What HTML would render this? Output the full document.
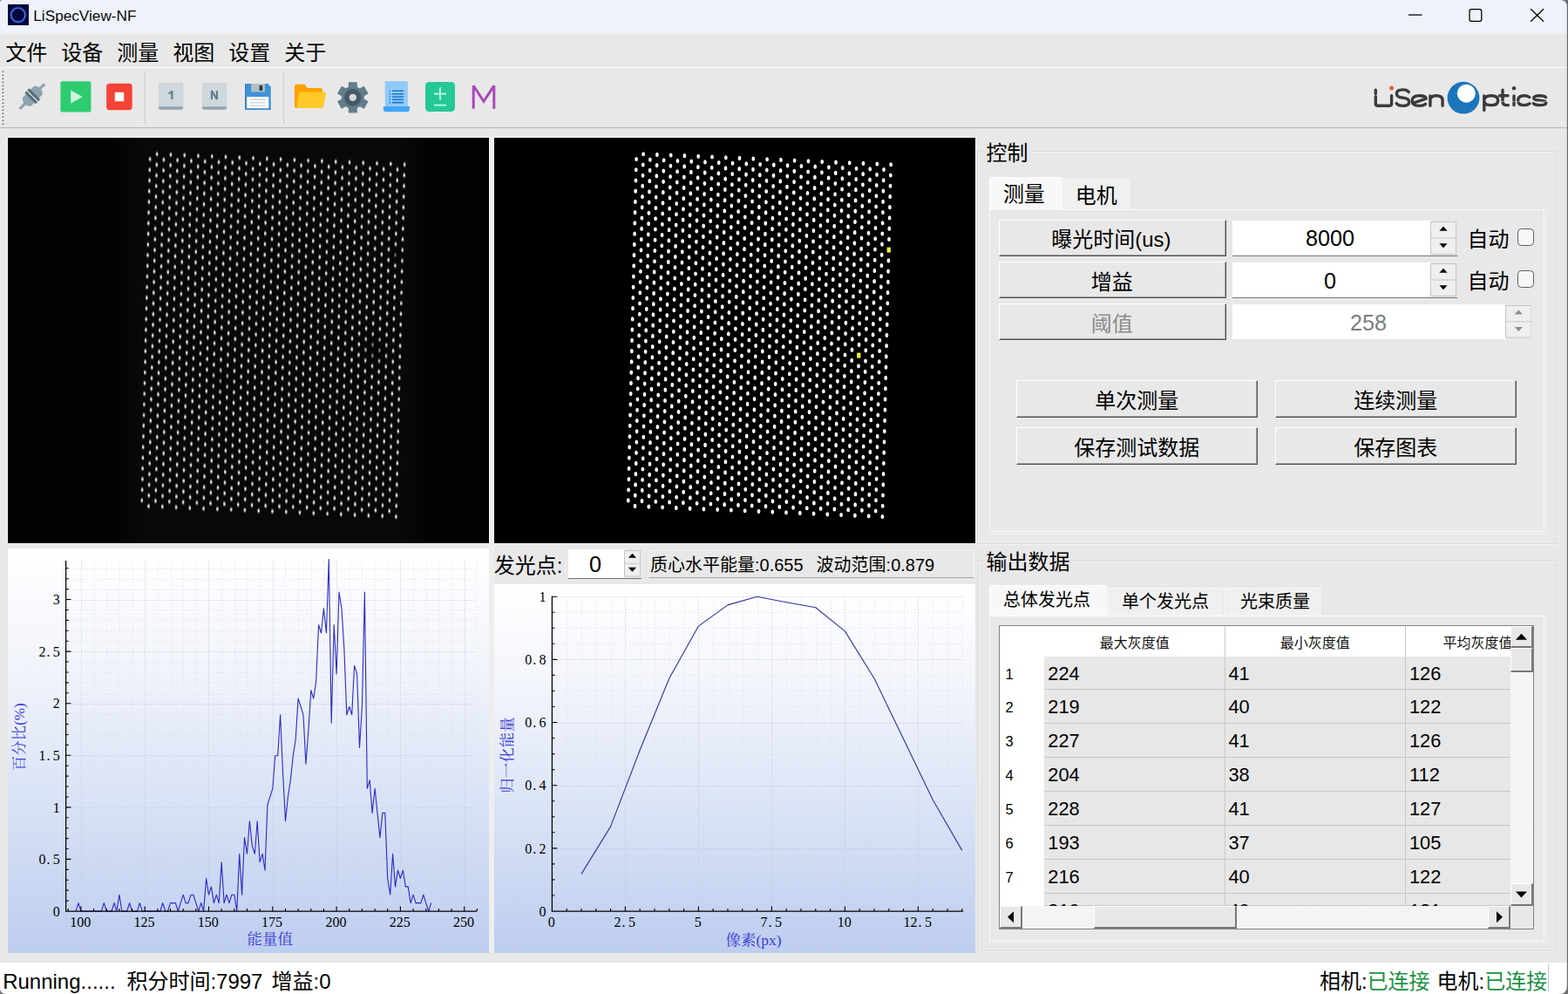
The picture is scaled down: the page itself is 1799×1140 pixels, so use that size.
<!DOCTYPE html>
<html lang="zh"><head><meta charset="utf-8"><title>LiSpecView-NF</title><style>
html,body{margin:0;padding:0}
body{width:1799px;height:1140px;overflow:hidden;background:#e8e8e8;position:relative;font-family:"Liberation Sans",sans-serif}
body>div,body>svg,.chart>svg,.chart>span,.sb>svg{position:absolute;box-sizing:border-box}
.t{white-space:nowrap}
.h{color:transparent;white-space:nowrap;overflow:hidden;text-align:center}
.btn{background:#e8e8e8;border-top:1px solid #fff;border-left:1px solid #fff;border-right:1.3px solid #4e4e4e;border-bottom:1.5px solid #4e4e4e;box-shadow:inset -1px -1px 0 #a2a2a2}
.spin{background:#fff}
.info{background:#e8e8e8;border-top:1px solid #f4f4f4;border-left:1px solid #efefef;border-right:1px solid #f6f6f6;border-bottom:1px solid #a4a4a4}
.grp{border:1px solid #dbdbdb;box-shadow:1px 1px 0 #f2f2f2, inset 1px 1px 0 #f2f2f2}
.pane{border:1px solid #fbfbfb;border-bottom-width:1.500px;background:#e8e8e8}
.pl{background:#f2f2f2}
.tab{background:#f0f0f0;border-top:1px solid #f5f5f5;border-left:1px solid #f6f6f6;border-right:1px solid #e6e6e6}
.tab.sel{background:#f8f8f8;border:0;border-top:1px solid #fcfcfc;border-left:1px solid #fcfcfc}
.chart{overflow:hidden}
.chart span{font-family:"Liberation Serif",serif;font-size:16px;line-height:19px;color:#000;white-space:nowrap}
.chart span i{font-style:normal;display:inline-block;width:8.400px;text-align:left;text-indent:1px}
.xl{width:60px;text-align:center}
.yl{width:58px;text-align:right}
.tbl{border:1px solid #828282;background:#fff}
.tbody{overflow:hidden}
.row{position:absolute;left:0;width:586px;overflow:hidden;font-size:21.800px;line-height:39px;color:#000}
.row b{position:absolute;left:6.500px;top:1px;font-weight:400;font-size:16.500px}
.row span{position:absolute;top:0}
.row::before{content:"";position:absolute;left:51.3px;right:0;top:0;bottom:0;background:#e7e7e7;border-bottom:1px solid #c6c6c6}
.row span,.row b{z-index:1}
.vl{position:absolute;top:0;width:1px;height:100%;background:#c9c9c9}
.track{background:#f4f4f4;background-image:repeating-conic-gradient(#fdfdfd 0 25%,#ebebeb 0 50%);background-size:2px 2px}
.sb{background:#e8e8e8;border-top:1px solid #fff;border-left:1px solid #fff;border-right:2px solid #787878;border-bottom:2px solid #787878;overflow:hidden;z-index:5}
.track,.sb{z-index:5}
#ov{z-index:4;pointer-events:none}
#ov text{font-family:"Liberation Sans","Noto Sans CJK SC",sans-serif;fill:#000}
#ov text.sf{font-family:"Liberation Serif","Noto Serif CJK SC",serif;fill:#3d3dd0}
</style></head>
<body>
<div style="left:0px;top:0px;width:1799px;height:44px;background:linear-gradient(#eff2fa 0,#eff2fa 36px,#e8e8e8 41px)"></div>
<svg style="left:9px;top:5px" width="24" height="24" viewBox="0 0 24 24"><rect width="24" height="24" fill="#06063a"/>
<circle cx="11.8" cy="12.1" r="8.1" fill="none" stroke="#1c3fb8" stroke-width="3.2" opacity=".55"/>
<circle cx="11.8" cy="12.1" r="8.1" fill="none" stroke="#4a86ee" stroke-width="1.2"/></svg>
<div class="t" style="left:38.300px;top:7.600px;font-size:17.2px;line-height:20px;color:#0a0a0a">LiSpecView-NF</div>
<svg style="left:1600px;top:0" width="190" height="40" viewBox="0 0 190 40" fill="none" stroke="#000" stroke-width="1.25">
<path d="M16 17.1H31.5"/><rect x="86" y="10.6" width="13.8" height="13.8" rx="2.2"/><path d="M156.2 10.2 171 24.8M171 10.2 156.2 24.8"/></svg>
<div class="h" style="left:6px;top:44px;width:48px;height:30px;font-size:24px">文件</div>
<div class="h" style="left:70px;top:44px;width:48px;height:30px;font-size:24px">设备</div>
<div class="h" style="left:134px;top:44px;width:48px;height:30px;font-size:24px">测量</div>
<div class="h" style="left:198px;top:44px;width:48px;height:30px;font-size:24px">视图</div>
<div class="h" style="left:262px;top:44px;width:48px;height:30px;font-size:24px">设置</div>
<div class="h" style="left:326px;top:44px;width:48px;height:30px;font-size:24px">关于</div>
<div style="left:0px;top:77px;width:1799px;height:1px;background:#fff"></div>
<div style="left:0px;top:146px;width:1799px;height:1px;background:#b6b6b6"></div>
<div style="left:0px;top:147px;width:1799px;height:1px;background:#e4e4e4"></div>
<svg style="left:0px;top:78px" width="8" height="68" viewBox="0 0 8 68"><rect x="1.500" y="2.6" width="1.7" height="1.7" fill="#fff"/><rect x="2.500" y="3.4" width="1.700" height="1.700" fill="#6e6e6e"/><rect x="1.500" y="6.6" width="1.7" height="1.7" fill="#fff"/><rect x="2.500" y="7.4" width="1.700" height="1.700" fill="#6e6e6e"/><rect x="1.500" y="10.6" width="1.7" height="1.7" fill="#fff"/><rect x="2.500" y="11.4" width="1.700" height="1.700" fill="#6e6e6e"/><rect x="1.500" y="14.6" width="1.7" height="1.7" fill="#fff"/><rect x="2.500" y="15.4" width="1.700" height="1.700" fill="#6e6e6e"/><rect x="1.500" y="18.6" width="1.7" height="1.7" fill="#fff"/><rect x="2.500" y="19.4" width="1.700" height="1.700" fill="#6e6e6e"/><rect x="1.500" y="22.6" width="1.7" height="1.7" fill="#fff"/><rect x="2.500" y="23.4" width="1.700" height="1.700" fill="#6e6e6e"/><rect x="1.500" y="26.6" width="1.7" height="1.7" fill="#fff"/><rect x="2.500" y="27.4" width="1.700" height="1.700" fill="#6e6e6e"/><rect x="1.500" y="30.6" width="1.7" height="1.7" fill="#fff"/><rect x="2.500" y="31.4" width="1.700" height="1.700" fill="#6e6e6e"/><rect x="1.500" y="34.6" width="1.7" height="1.7" fill="#fff"/><rect x="2.500" y="35.4" width="1.700" height="1.700" fill="#6e6e6e"/><rect x="1.500" y="38.6" width="1.7" height="1.7" fill="#fff"/><rect x="2.500" y="39.4" width="1.700" height="1.700" fill="#6e6e6e"/><rect x="1.500" y="42.6" width="1.7" height="1.7" fill="#fff"/><rect x="2.500" y="43.4" width="1.700" height="1.700" fill="#6e6e6e"/><rect x="1.500" y="46.6" width="1.7" height="1.7" fill="#fff"/><rect x="2.500" y="47.4" width="1.700" height="1.700" fill="#6e6e6e"/><rect x="1.500" y="50.6" width="1.7" height="1.7" fill="#fff"/><rect x="2.500" y="51.4" width="1.700" height="1.700" fill="#6e6e6e"/><rect x="1.500" y="54.6" width="1.7" height="1.7" fill="#fff"/><rect x="2.500" y="55.4" width="1.700" height="1.700" fill="#6e6e6e"/><rect x="1.500" y="58.6" width="1.7" height="1.7" fill="#fff"/><rect x="2.500" y="59.4" width="1.700" height="1.700" fill="#6e6e6e"/><rect x="1.500" y="62.6" width="1.7" height="1.7" fill="#fff"/><rect x="2.500" y="63.4" width="1.700" height="1.700" fill="#6e6e6e"/></svg>
<div style="left:166px;top:82px;width:1px;height:60px;background:#c9c9c9"></div>
<div style="left:325px;top:82px;width:1px;height:60px;background:#c9c9c9"></div>
<svg style="left:14px;top:86px" width="48" height="48" viewBox="0 0 48 48" ><g transform="translate(23.3 24.2) rotate(-45)">
<rect x="-20.8" y="-1.7" width="40.3" height="3.4" fill="#90a4ae"/>
<path d="M-12.3-3.6 L-9.3-6.9H-3V6.9H-9.3L-12.3 3.6Z" fill="#90a4ae"/>
<path d="M12.3-3.6 L9.3-6.9H3V6.9H9.3L12.3 3.6Z" fill="#90a4ae"/>
<rect x="-3.8" y="-8.9" width="3.2" height="17.8" fill="#546e7a"/>
<rect x="-0.6" y="-8.9" width="1.1" height="17.8" fill="#e2e7ea"/>
<rect x="0.5" y="-8.9" width="3.2" height="17.8" fill="#546e7a"/></g></svg>
<svg style="left:69px;top:93px" width="36" height="36" viewBox="0 0 36 36" ><rect x=".4" y=".3" width="35" height="35.2" rx="1.6" fill="#2ecc71"/><path d="M12.1 10.5V25.7L25.7 18Z" fill="#c9f6dc"/></svg>
<svg style="left:122px;top:95px" width="31" height="32" viewBox="0 0 31 32" ><rect x=".1" y=".8" width="29.6" height="30.4" rx="3.6" fill="#f44336"/><rect x="9.7" y="10.8" width="10.5" height="10.4" fill="#fffdf9"/></svg>
<svg style="left:181.9px;top:93px" width="30" height="34" viewBox="0 0 30 34" ><path d="M0 4Q0 2.6 1.6 2.6H26.500Q28.1 2.6 28.1 4V30.6Q28.1 32.8 25.9 32.8H2.2Q0 32.8 0 30.6Z" fill="#90a4ae"/>
<path d="M0 4Q0 2.6 1.6 2.6H26.500Q28.1 2.6 28.1 4V29.2H0Z" fill="#cfd8dc"/>
<rect x=".3" y=".9" width="27.5" height="1.8" fill="#dde3e6" opacity=".55"/><path d="M11.2 13.600 14.600 10.900H16.400V20.900H14.200V13.700L11.800 15.400Z" fill="#607d8b"/></svg>
<svg style="left:232px;top:93px" width="30" height="34" viewBox="0 0 30 34" ><path d="M0 4Q0 2.6 1.6 2.6H26.500Q28.1 2.6 28.1 4V30.6Q28.1 32.8 25.9 32.8H2.2Q0 32.8 0 30.6Z" fill="#90a4ae"/>
<path d="M0 4Q0 2.6 1.6 2.6H26.500Q28.1 2.6 28.1 4V29.2H0Z" fill="#cfd8dc"/>
<rect x=".3" y=".9" width="27.5" height="1.8" fill="#dde3e6" opacity=".55"/><path d="M10.900 20.900V11L16.900 20.900V11" fill="none" stroke="#607d8b" stroke-width="2.100" stroke-linejoin="bevel"/></svg>
<svg style="left:281px;top:96px" width="31" height="31" viewBox="0 0 31 31" ><path d="M.1 0H26.3L29.7 3.4V29.8H.1Z" fill="#3e93d6"/>
<path d="M.1 0H1.3V29.8H.1ZM.1 28.6H29.7V29.8H.1Z" fill="#3780c2"/>
<rect x="7.2" y="0" width="15.8" height="9.6" rx="1" fill="#b0bec5"/>
<rect x="16.7" y="2.1" width="3.4" height="5.8" fill="#263238"/>
<rect x="2.2" y="15" width="25.1" height="13.2" fill="#fff"/>
<path d="M5.9 18.3H23.8M5.9 21.7H23.8M5.9 25.2H23.8" stroke="#cfd8dc" stroke-width="1.5"/></svg>
<svg style="left:337px;top:96px" width="38" height="30" viewBox="0 0 38 30" ><path d="M.9 3.6Q.9 .8 3.7 .8H11.2Q12.8 .8 13.8 2.2L15.6 5H30.5Q33 5 33 7.5V25Q33 27.9 30.2 27.9H3.7Q.9 27.9 .9 25Z" fill="#ffa000"/>
<path d="M5.500 11.900Q5.800 9.600 8.100 9.600H34.600Q37.200 9.600 36.800 12.100L34.400 25.600Q33.900 27.900 31.500 27.900H5.800Q3.400 27.900 3.700 25.500Z" fill="#ffca28"/></svg>
<svg style="left:386px;top:92px" width="38" height="40" viewBox="0 0 38 40" ><path d="M14.5 8.0L14.4 2.8L23.2 2.8L23.1 8.0L26.9 10.1L31.4 7.5L35.8 15.1L31.2 17.6L31.2 22.0L35.8 24.5L31.4 32.1L26.9 29.5L23.1 31.6L23.2 36.8L14.4 36.8L14.5 31.6L10.7 29.5L6.2 32.1L1.8 24.5L6.4 22.0L6.4 17.6L1.8 15.1L6.2 7.5L10.7 10.1Z" fill="#607d8b" stroke="#607d8b" stroke-width="1.2" stroke-linejoin="round"/><circle cx="18.8" cy="19.8" r="9.7" fill="#455a64"/><circle cx="18.8" cy="19.8" r="4.1" fill="#d3dade"/></svg>
<svg style="left:439px;top:92px" width="32" height="38" viewBox="0 0 32 38" ><rect x="2.7" y="1.1" width="26.2" height="30" fill="#90caf9"/>
<path d="M.8 30H31V33Q31 36.2 27.8 36.2H4Q.8 36.2 .8 33Z" fill="#42a5f5"/>
<path d="M11 12.3H24M11 15.7H24M11 19H24M11 22.3H24M11 25.6H24" stroke="#1976d2" stroke-width="1.6"/>
<path d="M7.6 12.3H9.1M7.6 15.7H9.1M7.6 19H9.1M7.6 22.3H9.1M7.6 25.6H9.1" stroke="#1976d2" stroke-width="1.6"/></svg>
<svg style="left:488px;top:93px" width="35" height="36" viewBox="0 0 35 36" ><rect x="0" y=".9" width="34" height="34.1" rx="4.2" fill="#26c796"/>
<path d="M17 7.3V22M10 14.7H24M10 27.7H24" stroke="#bdffeb" stroke-width="1.75" fill="none"/></svg>
<svg style="left:540px;top:95px" width="32" height="32" viewBox="0 0 32 32" ><path d="M3.2 29.7V3.300L15 21.300 26.800 3.300V29.700" fill="none" stroke="#ab47bc" stroke-width="3" stroke-linejoin="miter" stroke-miterlimit="3"/></svg>
<svg style="left:1570px;top:88px" width="215" height="48" viewBox="0 0 215 48" ><g fill="none" stroke="#3b3b3d" stroke-width="3.4" stroke-linecap="round" stroke-linejoin="round">
<path d="M8.3 15.2V19.4M8.3 22.8V30.4Q8.3 33.3 11.2 33.3H23.8Q26.6 33.3 26.6 30.4V21.6"/>
<path d="M46.3 17.6Q44.4 14.9 39.4 14.9Q32.4 14.9 32.4 19.4Q32.4 23.4 39.5 24.1Q46.7 24.8 46.7 29Q46.7 33.4 39.5 33.4Q34.2 33.4 32.2 30.6"/>
<path d="M65.6 31.4Q63 33.4 58.4 33.4Q50.2 33.4 50.2 27.5Q50.2 21.7 58.2 21.7Q66.2 21.7 66.2 25.2L51 30.3"/>
<path d="M70.9 33.3V21.9M70.9 27Q70.9 21.7 78 21.7Q85.1 21.7 85.1 27V33.3"/>
<path d="M132.8 22V38.4M132.800 27Q132.800 21.700 141 21.700Q148.700 21.700 148.700 27.200Q148.700 32.600 141 32.600Q132.800 32.600 132.800 27.400"/>
<path d="M154 15.200V28.200Q154 32.600 158.500 32.600H160.500M150.500 21.700H160"/>
<path d="M167 22V32.600"/>
<path d="M184.800 23.500Q182.600 21.700 178.700 21.700Q171.600 21.700 171.600 27.200Q171.600 32.600 178.700 32.600Q182.800 32.600 185 30.800"/>
<path d="M203.500 23.600Q201.500 21.700 196.500 21.700Q189.700 21.700 189.700 24.600Q189.700 26.900 196.500 27.200Q203.800 27.500 203.800 29.900Q203.800 32.600 196.600 32.600Q191.500 32.600 189.300 30.700"/>
</g>
<circle cx="26.6" cy="13.1" r="2.5" fill="#e0642b"/>
<circle cx="167" cy="13.200" r="2.2" fill="#3b3b3d"/>
<circle cx="109" cy="24.200" r="18.400" fill="#1b75bc"/>
<circle cx="112.300" cy="19.200" r="10.500" fill="#fdfefe"/>
<path d="M151 28.400H205" stroke="#e8e8e8" stroke-width=".7" opacity=".8"/></svg>
<div style="left:561px;top:157px;width:6px;height:936px;background:#eeeeee"></div>
<div style="left:8px;top:157px;width:554px;height:467px;background:#f2f2f2"></div>
<div style="left:566px;top:157px;width:554px;height:467px;background:#f2f2f2"></div>
<svg style="left:9px;top:158px;background:#020202" width="552" height="465" viewBox="0 0 552 465">
<defs><path id="dots" d="M163.1 18.0h0M162.8 27.0h0M162.5 36.0h0M162.2 45.0h0M161.9 54.0h0M161.6 63.0h0M161.3 72.0h0M161.1 81.0h0M160.8 90.0h0M160.5 99.0h0M160.2 108.0h0M159.9 117.0h0M159.6 126.0h0M159.3 134.9h0M159.0 143.9h0M158.7 152.9h0M158.4 161.9h0M158.1 170.9h0M157.8 179.9h0M157.6 188.9h0M157.3 197.9h0M157.0 206.9h0M156.7 215.9h0M156.4 224.9h0M156.1 233.9h0M155.8 242.9h0M155.5 251.9h0M155.2 260.9h0M154.9 269.9h0M154.6 278.9h0M154.4 287.9h0M154.1 296.9h0M153.8 305.8h0M171.1 13.8h0M170.8 22.8h0M170.5 31.8h0M170.2 40.7h0M170.0 49.7h0M169.7 58.7h0M169.4 67.7h0M169.1 76.7h0M168.8 85.7h0M168.5 94.7h0M168.2 103.7h0M167.9 112.7h0M167.6 121.7h0M167.3 130.7h0M167.0 139.7h0M166.8 148.7h0M166.5 157.7h0M166.2 166.7h0M165.9 175.7h0M165.6 184.7h0M165.3 193.7h0M165.0 202.7h0M164.7 211.6h0M164.4 220.6h0M164.1 229.6h0M163.8 238.6h0M163.6 247.6h0M163.3 256.6h0M163.0 265.6h0M162.7 274.6h0M162.4 283.6h0M162.1 292.6h0M161.8 301.6h0M161.5 310.6h0M178.9 18.5h0M178.6 27.5h0M178.3 36.5h0M178.0 45.5h0M177.7 54.5h0M177.4 63.5h0M177.1 72.5h0M176.8 81.5h0M176.5 90.5h0M176.2 99.5h0M176.0 108.5h0M175.7 117.5h0M175.4 126.4h0M175.1 135.4h0M174.8 144.4h0M174.5 153.4h0M174.2 162.4h0M173.9 171.4h0M173.6 180.4h0M173.3 189.4h0M173.0 198.4h0M172.7 207.4h0M172.5 216.4h0M172.2 225.4h0M171.9 234.4h0M171.6 243.4h0M171.3 252.4h0M171.0 261.4h0M170.7 270.4h0M170.4 279.4h0M170.1 288.4h0M169.8 297.3h0M169.5 306.3h0M186.9 14.3h0M186.6 23.2h0M186.3 32.2h0M186.0 41.2h0M185.7 50.2h0M185.4 59.2h0M185.1 68.2h0M184.9 77.2h0M184.6 86.2h0M184.3 95.2h0M184.0 104.2h0M183.7 113.2h0M183.4 122.2h0M183.1 131.2h0M182.8 140.2h0M182.5 149.2h0M182.2 158.2h0M181.9 167.2h0M181.7 176.2h0M181.4 185.2h0M181.1 194.2h0M180.8 203.1h0M180.5 212.1h0M180.2 221.1h0M179.9 230.1h0M179.6 239.1h0M179.3 248.1h0M179.0 257.1h0M178.7 266.1h0M178.5 275.1h0M178.2 284.1h0M177.9 293.1h0M177.6 302.1h0M177.3 311.1h0M194.6 19.0h0M194.3 28.0h0M194.1 37.0h0M193.8 46.0h0M193.5 55.0h0M193.2 64.0h0M192.9 73.0h0M192.6 82.0h0M192.3 91.0h0M192.0 100.0h0M191.7 108.9h0M191.4 117.9h0M191.1 126.9h0M190.9 135.9h0M190.6 144.9h0M190.3 153.9h0M190.0 162.9h0M189.7 171.9h0M189.4 180.9h0M189.1 189.9h0M188.8 198.9h0M188.5 207.9h0M188.2 216.9h0M187.9 225.9h0M187.6 234.9h0M187.4 243.9h0M187.1 252.9h0M186.8 261.9h0M186.5 270.9h0M186.2 279.9h0M185.9 288.8h0M185.6 297.8h0M185.3 306.8h0M202.7 14.7h0M202.4 23.7h0M202.1 32.7h0M201.8 41.7h0M201.5 50.7h0M201.2 59.7h0M200.9 68.7h0M200.6 77.7h0M200.3 86.7h0M200.0 95.7h0M199.8 104.7h0M199.5 113.7h0M199.2 122.7h0M198.9 131.7h0M198.6 140.7h0M198.3 149.7h0M198.0 158.7h0M197.7 167.7h0M197.4 176.7h0M197.1 185.6h0M196.8 194.6h0M196.6 203.6h0M196.3 212.6h0M196.0 221.6h0M195.7 230.6h0M195.4 239.6h0M195.1 248.6h0M194.8 257.6h0M194.5 266.6h0M194.2 275.6h0M193.9 284.6h0M193.6 293.6h0M193.4 302.6h0M193.1 311.6h0M210.4 19.5h0M210.1 28.5h0M209.8 37.5h0M209.5 46.5h0M209.2 55.5h0M209.0 64.5h0M208.7 73.5h0M208.4 82.5h0M208.1 91.5h0M207.8 100.4h0M207.5 109.4h0M207.2 118.4h0M206.9 127.4h0M206.6 136.4h0M206.3 145.4h0M206.0 154.4h0M205.8 163.4h0M205.5 172.4h0M205.2 181.4h0M204.9 190.4h0M204.6 199.4h0M204.3 208.4h0M204.0 217.4h0M203.7 226.4h0M203.4 235.4h0M203.1 244.4h0M202.8 253.4h0M202.5 262.4h0M202.3 271.3h0M202.0 280.3h0M201.7 289.3h0M201.4 298.3h0M201.1 307.3h0M218.4 15.2h0M218.2 24.2h0M217.9 33.2h0M217.6 42.2h0M217.3 51.2h0M217.0 60.2h0M216.7 69.2h0M216.4 78.2h0M216.1 87.2h0M215.8 96.2h0M215.5 105.2h0M215.2 114.2h0M214.9 123.2h0M214.7 132.2h0M214.4 141.2h0M214.1 150.2h0M213.8 159.2h0M213.5 168.2h0M213.2 177.1h0M212.9 186.1h0M212.6 195.1h0M212.3 204.1h0M212.0 213.1h0M211.7 222.1h0M211.5 231.1h0M211.2 240.1h0M210.9 249.1h0M210.6 258.1h0M210.3 267.1h0M210.0 276.1h0M209.7 285.1h0M209.4 294.1h0M209.1 303.1h0M208.8 312.1h0M226.2 20.0h0M225.9 29.0h0M225.6 38.0h0M225.3 47.0h0M225.0 56.0h0M224.7 65.0h0M224.4 74.0h0M224.1 82.9h0M223.9 91.9h0M223.6 100.9h0M223.3 109.9h0M223.0 118.9h0M222.7 127.9h0M222.4 136.9h0M222.1 145.9h0M221.8 154.9h0M221.5 163.9h0M221.2 172.9h0M220.9 181.9h0M220.7 190.9h0M220.4 199.9h0M220.1 208.9h0M219.8 217.9h0M219.5 226.9h0M219.2 235.9h0M218.9 244.9h0M218.6 253.9h0M218.3 262.8h0M218.0 271.8h0M217.7 280.8h0M217.4 289.8h0M217.2 298.8h0M216.9 307.8h0M234.2 15.7h0M233.9 24.7h0M233.6 33.7h0M233.3 42.7h0M233.1 51.7h0M232.8 60.7h0M232.5 69.7h0M232.2 78.7h0M231.9 87.7h0M231.6 96.7h0M231.3 105.7h0M231.0 114.7h0M230.7 123.7h0M230.4 132.7h0M230.1 141.7h0M229.8 150.7h0M229.6 159.6h0M229.3 168.6h0M229.0 177.6h0M228.7 186.6h0M228.4 195.6h0M228.1 204.6h0M227.8 213.6h0M227.5 222.6h0M227.2 231.6h0M226.9 240.6h0M226.6 249.6h0M226.4 258.6h0M226.1 267.6h0M225.8 276.6h0M225.5 285.6h0M225.2 294.6h0M224.9 303.6h0M224.6 312.6h0M242.0 20.5h0M241.7 29.5h0M241.4 38.5h0M241.1 47.5h0M240.8 56.5h0M240.5 65.5h0M240.2 74.4h0M239.9 83.4h0M239.6 92.4h0M239.3 101.4h0M239.0 110.4h0M238.8 119.4h0M238.5 128.4h0M238.2 137.4h0M237.9 146.4h0M237.6 155.4h0M237.3 164.4h0M237.0 173.4h0M236.7 182.4h0M236.4 191.4h0M236.1 200.4h0M235.8 209.4h0M235.6 218.4h0M235.3 227.4h0M235.0 236.4h0M234.7 245.3h0M234.4 254.3h0M234.1 263.3h0M233.8 272.3h0M233.5 281.3h0M233.2 290.3h0M232.9 299.3h0M232.6 308.3h0M250.0 16.2h0M249.7 25.2h0M249.4 34.2h0M249.1 43.2h0M248.8 52.2h0M248.5 61.2h0M248.2 70.2h0M248.0 79.2h0M247.7 88.2h0M247.4 97.2h0M247.1 106.2h0M246.8 115.2h0M246.5 124.2h0M246.2 133.2h0M245.9 142.2h0M245.6 151.1h0M245.3 160.1h0M245.0 169.1h0M244.8 178.1h0M244.5 187.1h0M244.2 196.1h0M243.9 205.1h0M243.6 214.1h0M243.3 223.1h0M243.0 232.1h0M242.7 241.1h0M242.4 250.1h0M242.1 259.1h0M241.8 268.1h0M241.5 277.1h0M241.3 286.1h0M241.0 295.1h0M240.7 304.1h0M240.4 313.1h0M257.7 21.0h0M257.4 30.0h0M257.2 39.0h0M256.9 48.0h0M256.6 56.9h0M256.3 65.9h0M256.0 74.9h0M255.7 83.9h0M255.4 92.9h0M255.1 101.9h0M254.8 110.9h0M254.5 119.9h0M254.2 128.9h0M253.9 137.9h0M253.7 146.9h0M253.4 155.9h0M253.1 164.9h0M252.8 173.9h0M252.5 182.9h0M252.2 191.9h0M251.9 200.9h0M251.6 209.9h0M251.3 218.9h0M251.0 227.9h0M250.7 236.8h0M250.5 245.8h0M250.2 254.8h0M249.9 263.8h0M249.6 272.8h0M249.3 281.8h0M249.0 290.8h0M248.7 299.8h0M248.4 308.8h0M265.8 16.7h0M265.5 25.7h0M265.2 34.7h0M264.9 43.7h0M264.6 52.7h0M264.3 61.7h0M264.0 70.7h0M263.7 79.7h0M263.4 88.7h0M263.1 97.7h0M262.9 106.7h0M262.6 115.7h0M262.3 124.7h0M262.0 133.7h0M261.7 142.6h0M261.4 151.6h0M261.1 160.6h0M260.8 169.6h0M260.5 178.6h0M260.2 187.6h0M259.9 196.6h0M259.7 205.6h0M259.4 214.6h0M259.1 223.6h0M258.8 232.6h0M258.5 241.6h0M258.2 250.6h0M257.9 259.6h0M257.6 268.6h0M257.3 277.6h0M257.0 286.6h0M256.7 295.6h0M256.4 304.6h0M256.2 313.5h0M273.5 21.5h0M273.2 30.5h0M272.9 39.5h0M272.6 48.4h0M272.3 57.4h0M272.1 66.4h0M271.8 75.4h0M271.5 84.4h0M271.2 93.4h0M270.9 102.4h0M270.6 111.4h0M270.3 120.4h0M270.0 129.4h0M269.7 138.4h0M269.4 147.4h0M269.1 156.4h0M268.8 165.4h0M268.6 174.4h0M268.3 183.4h0M268.0 192.4h0M267.7 201.4h0M267.4 210.4h0M267.1 219.3h0M266.8 228.3h0M266.5 237.3h0M266.2 246.3h0M265.9 255.3h0M265.6 264.3h0M265.4 273.3h0M265.1 282.3h0M264.8 291.3h0M264.5 300.3h0M264.2 309.3h0M281.5 17.2h0M281.2 26.2h0M281.0 35.2h0M280.7 44.2h0M280.4 53.2h0M280.1 62.2h0M279.8 71.2h0M279.5 80.2h0M279.2 89.2h0M278.9 98.2h0M278.6 107.2h0M278.3 116.2h0M278.0 125.1h0M277.8 134.1h0M277.5 143.1h0M277.2 152.1h0M276.9 161.1h0M276.6 170.1h0M276.3 179.1h0M276.0 188.1h0M275.7 197.1h0M275.4 206.1h0M275.1 215.1h0M274.8 224.1h0M274.6 233.1h0M274.3 242.1h0M274.0 251.1h0M273.7 260.1h0M273.4 269.1h0M273.1 278.1h0M272.8 287.1h0M272.5 296.1h0M272.2 305.0h0M271.9 314.0h0M289.3 22.0h0M289.0 31.0h0M288.7 39.9h0M288.4 48.9h0M288.1 57.9h0M287.8 66.9h0M287.5 75.9h0M287.2 84.9h0M287.0 93.9h0M286.7 102.9h0M286.4 111.9h0M286.1 120.9h0M285.8 129.9h0M285.5 138.9h0M285.2 147.9h0M284.9 156.9h0M284.6 165.9h0M284.3 174.9h0M284.0 183.9h0M283.7 192.9h0M283.5 201.9h0M283.2 210.8h0M282.9 219.8h0M282.6 228.8h0M282.3 237.8h0M282.0 246.8h0M281.7 255.8h0M281.4 264.8h0M281.1 273.8h0M280.8 282.8h0M280.5 291.8h0M280.3 300.8h0M280.0 309.8h0M297.3 17.7h0M297.0 26.7h0M296.7 35.7h0M296.4 44.7h0M296.1 53.7h0M295.9 62.7h0M295.6 71.7h0M295.3 80.7h0M295.0 89.7h0M294.7 98.7h0M294.4 107.7h0M294.1 116.6h0M293.8 125.6h0M293.5 134.6h0M293.2 143.6h0M292.9 152.6h0M292.7 161.6h0M292.4 170.6h0M292.1 179.6h0M291.8 188.6h0M291.5 197.6h0M291.2 206.6h0M290.9 215.6h0M290.6 224.6h0M290.3 233.6h0M290.0 242.6h0M289.7 251.6h0M289.5 260.6h0M289.2 269.6h0M288.9 278.6h0M288.6 287.5h0M288.3 296.5h0M288.0 305.5h0M287.7 314.5h0M305.1 22.4h0M304.8 31.4h0M304.5 40.4h0M304.2 49.4h0M303.9 58.4h0M303.6 67.4h0M303.3 76.4h0M303.0 85.4h0M302.7 94.4h0M302.4 103.4h0M302.1 112.4h0M301.9 121.4h0M301.6 130.4h0M301.3 139.4h0M301.0 148.4h0M300.7 157.4h0M300.4 166.4h0M300.1 175.4h0M299.8 184.4h0M299.5 193.4h0M299.2 202.3h0M298.9 211.3h0M298.6 220.3h0M298.4 229.3h0M298.1 238.3h0M297.8 247.3h0M297.5 256.3h0M297.2 265.3h0M296.9 274.3h0M296.6 283.3h0M296.3 292.3h0M296.0 301.3h0M295.7 310.3h0M313.1 18.2h0M312.8 27.2h0M312.5 36.2h0M312.2 45.2h0M311.9 54.2h0M311.6 63.2h0M311.3 72.2h0M311.0 81.2h0M310.8 90.2h0M310.5 99.1h0M310.2 108.1h0M309.9 117.1h0M309.6 126.1h0M309.3 135.1h0M309.0 144.1h0M308.7 153.1h0M308.4 162.1h0M308.1 171.1h0M307.8 180.1h0M307.6 189.1h0M307.3 198.1h0M307.0 207.1h0M306.7 216.1h0M306.4 225.1h0M306.1 234.1h0M305.8 243.1h0M305.5 252.1h0M305.2 261.1h0M304.9 270.1h0M304.6 279.0h0M304.4 288.0h0M304.1 297.0h0M303.8 306.0h0M303.5 315.0h0M320.8 22.9h0M320.5 31.9h0M320.2 40.9h0M320.0 49.9h0M319.7 58.9h0M319.4 67.9h0M319.1 76.9h0M318.8 85.9h0M318.5 94.9h0M318.2 103.9h0M317.9 112.9h0M317.6 121.9h0M317.3 130.9h0M317.0 139.9h0M316.8 148.9h0M316.5 157.9h0M316.2 166.9h0M315.9 175.9h0M315.6 184.8h0M315.3 193.8h0M315.0 202.8h0M314.7 211.8h0M314.4 220.8h0M314.1 229.8h0M313.8 238.8h0M313.6 247.8h0M313.3 256.8h0M313.0 265.8h0M312.7 274.8h0M312.4 283.8h0M312.1 292.8h0M311.8 301.8h0M311.5 310.8h0M328.9 18.7h0M328.6 27.7h0M328.3 36.7h0M328.0 45.7h0M327.7 54.7h0M327.4 63.7h0M327.1 72.7h0M326.8 81.7h0M326.5 90.6h0M326.2 99.6h0M325.9 108.6h0M325.7 117.6h0M325.4 126.6h0M325.1 135.6h0M324.8 144.6h0M324.5 153.6h0M324.2 162.6h0M323.9 171.6h0M323.6 180.6h0M323.3 189.6h0M323.0 198.6h0M322.7 207.6h0M322.5 216.6h0M322.2 225.6h0M321.9 234.6h0M321.6 243.6h0M321.3 252.6h0M321.0 261.5h0M320.7 270.5h0M320.4 279.5h0M320.1 288.5h0M319.8 297.5h0M319.5 306.5h0M319.3 315.5h0M336.6 23.4h0M336.3 32.4h0M336.0 41.4h0M335.7 50.4h0M335.4 59.4h0M335.1 68.4h0M334.9 77.4h0M334.6 86.4h0M334.3 95.4h0M334.0 104.4h0M333.7 113.4h0M333.4 122.4h0M333.1 131.4h0M332.8 140.4h0M332.5 149.4h0M332.2 158.4h0M331.9 167.4h0M331.7 176.3h0M331.4 185.3h0M331.1 194.3h0M330.8 203.3h0M330.5 212.3h0M330.2 221.3h0M329.9 230.3h0M329.6 239.3h0M329.3 248.3h0M329.0 257.3h0M328.7 266.3h0M328.5 275.3h0M328.2 284.3h0M327.9 293.3h0M327.6 302.3h0M327.3 311.3h0M344.6 19.2h0M344.3 28.2h0M344.1 37.2h0M343.8 46.2h0M343.5 55.2h0M343.2 64.2h0M342.9 73.1h0M342.6 82.1h0M342.3 91.1h0M342.0 100.1h0M341.7 109.1h0M341.4 118.1h0M341.1 127.1h0M340.9 136.1h0M340.6 145.1h0M340.3 154.1h0M340.0 163.1h0M339.7 172.1h0M339.4 181.1h0M339.1 190.1h0M338.8 199.1h0M338.5 208.1h0M338.2 217.1h0M337.9 226.1h0M337.6 235.1h0M337.4 244.1h0M337.1 253.0h0M336.8 262.0h0M336.5 271.0h0M336.2 280.0h0M335.9 289.0h0M335.6 298.0h0M335.3 307.0h0M335.0 316.0h0M352.4 23.9h0M352.1 32.9h0M351.8 41.9h0M351.5 50.9h0M351.2 59.9h0M350.9 68.9h0M350.6 77.9h0M350.3 86.9h0M350.0 95.9h0M349.8 104.9h0M349.5 113.9h0M349.2 122.9h0M348.9 131.9h0M348.6 140.9h0M348.3 149.9h0M348.0 158.8h0M347.7 167.8h0M347.4 176.8h0M347.1 185.8h0M346.8 194.8h0M346.6 203.8h0M346.3 212.8h0M346.0 221.8h0M345.7 230.8h0M345.4 239.8h0M345.1 248.8h0M344.8 257.8h0M344.5 266.8h0M344.2 275.8h0M343.9 284.8h0M343.6 293.8h0M343.4 302.8h0M343.1 311.8h0M360.4 19.7h0M360.1 28.7h0M359.8 37.7h0M359.5 46.7h0M359.2 55.7h0M359.0 64.6h0M358.7 73.6h0M358.4 82.6h0M358.1 91.6h0M357.8 100.6h0M357.5 109.6h0M357.2 118.6h0M356.9 127.6h0M356.6 136.6h0M356.3 145.6h0M356.0 154.6h0M355.8 163.6h0M355.5 172.6h0M355.2 181.6h0M354.9 190.6h0M354.6 199.6h0M354.3 208.6h0M354.0 217.6h0M353.7 226.6h0M353.4 235.5h0M353.1 244.5h0M352.8 253.5h0M352.5 262.5h0M352.3 271.5h0M352.0 280.5h0M351.7 289.5h0M351.4 298.5h0M351.1 307.5h0M350.8 316.5h0M368.2 24.4h0M367.9 33.4h0M367.6 42.4h0M367.3 51.4h0M367.0 60.4h0M366.7 69.4h0M366.4 78.4h0M366.1 87.4h0M365.8 96.4h0M365.5 105.4h0M365.2 114.4h0M364.9 123.4h0M364.7 132.4h0M364.4 141.4h0M364.1 150.3h0M363.8 159.3h0M363.5 168.3h0M363.2 177.3h0M362.9 186.3h0M362.6 195.3h0M362.3 204.3h0M362.0 213.3h0M361.7 222.3h0M361.5 231.3h0M361.2 240.3h0M360.9 249.3h0M360.6 258.3h0M360.3 267.3h0M360.0 276.3h0M359.7 285.3h0M359.4 294.3h0M359.1 303.3h0M358.8 312.3h0M376.2 20.2h0M375.9 29.2h0M375.6 38.2h0M375.3 47.1h0M375.0 56.1h0M374.7 65.1h0M374.4 74.1h0M374.1 83.1h0M373.9 92.1h0M373.6 101.1h0M373.3 110.1h0M373.0 119.1h0M372.7 128.1h0M372.4 137.1h0M372.1 146.1h0M371.8 155.1h0M371.5 164.1h0M371.2 173.1h0M370.9 182.1h0M370.7 191.1h0M370.4 200.1h0M370.1 209.1h0M369.8 218.1h0M369.5 227.0h0M369.2 236.0h0M368.9 245.0h0M368.6 254.0h0M368.3 263.0h0M368.0 272.0h0M367.7 281.0h0M367.4 290.0h0M367.2 299.0h0M366.9 308.0h0M366.6 317.0h0M383.9 24.9h0M383.6 33.9h0M383.3 42.9h0M383.1 51.9h0M382.8 60.9h0M382.5 69.9h0M382.2 78.9h0M381.9 87.9h0M381.6 96.9h0M381.3 105.9h0M381.0 114.9h0M380.7 123.9h0M380.4 132.8h0M380.1 141.8h0M379.8 150.8h0M379.6 159.8h0M379.3 168.8h0M379.0 177.8h0M378.7 186.8h0M378.4 195.8h0M378.1 204.8h0M377.8 213.8h0M377.5 222.8h0M377.2 231.8h0M376.9 240.8h0M376.6 249.8h0M376.4 258.8h0M376.1 267.8h0M375.8 276.8h0M375.5 285.8h0M375.2 294.8h0M374.9 303.8h0M374.6 312.7h0M392.0 20.7h0M391.7 29.7h0M391.4 38.6h0M391.1 47.6h0M390.8 56.6h0M390.5 65.6h0M390.2 74.6h0M389.9 83.6h0M389.6 92.6h0M389.3 101.6h0M389.0 110.6h0M388.8 119.6h0M388.5 128.6h0M388.2 137.6h0M387.9 146.6h0M387.6 155.6h0M387.3 164.6h0M387.0 173.6h0M386.7 182.6h0M386.4 191.6h0M386.1 200.6h0M385.8 209.6h0M385.6 218.5h0M385.3 227.5h0M385.0 236.5h0M384.7 245.5h0M384.4 254.5h0M384.1 263.5h0M383.8 272.5h0M383.5 281.5h0M383.2 290.5h0M382.9 299.5h0M382.6 308.5h0M382.3 317.5h0M399.7 25.4h0M399.4 34.4h0M399.1 43.4h0M398.8 52.4h0M398.5 61.4h0M398.2 70.4h0M398.0 79.4h0M397.7 88.4h0M397.4 97.4h0M397.1 106.4h0M396.8 115.4h0M396.5 124.3h0M396.2 133.3h0M395.9 142.3h0M395.6 151.3h0M395.3 160.3h0M395.0 169.3h0M394.7 178.3h0M394.5 187.3h0M394.2 196.3h0M393.9 205.3h0M393.6 214.3h0M393.3 223.3h0M393.0 232.3h0M392.7 241.3h0M392.4 250.3h0M392.1 259.3h0M391.8 268.3h0M391.5 277.3h0M391.3 286.3h0M391.0 295.2h0M390.7 304.2h0M390.4 313.2h0M407.7 21.2h0M407.4 30.1h0M407.1 39.1h0M406.9 48.1h0M406.6 57.1h0M406.3 66.1h0M406.0 75.1h0M405.7 84.1h0M405.4 93.1h0M405.1 102.1h0M404.8 111.1h0M404.5 120.1h0M404.2 129.1h0M403.9 138.1h0M403.7 147.1h0M403.4 156.1h0M403.1 165.1h0M402.8 174.1h0M402.5 183.1h0M402.2 192.1h0M401.9 201.0h0M401.6 210.0h0M401.3 219.0h0M401.0 228.0h0M400.7 237.0h0M400.5 246.0h0M400.2 255.0h0M399.9 264.0h0M399.6 273.0h0M399.3 282.0h0M399.0 291.0h0M398.7 300.0h0M398.4 309.0h0M398.1 318.0h0M415.5 25.9h0M415.2 34.9h0M414.9 43.9h0M414.6 52.9h0M414.3 61.9h0M414.0 70.9h0M413.7 79.9h0M413.4 88.9h0M413.1 97.9h0M412.9 106.9h0M412.6 115.8h0M412.3 124.8h0M412.0 133.8h0M411.7 142.8h0M411.4 151.8h0M411.1 160.8h0M410.8 169.8h0M410.5 178.8h0M410.2 187.8h0M409.9 196.8h0M409.7 205.8h0M409.4 214.8h0M409.1 223.8h0M408.8 232.8h0M408.5 241.8h0M408.2 250.8h0M407.9 259.8h0M407.6 268.8h0M407.3 277.8h0M407.0 286.7h0M406.7 295.7h0M406.4 304.7h0M406.2 313.7h0M423.5 21.6h0M423.2 30.6h0M422.9 39.6h0M422.6 48.6h0M422.3 57.6h0M422.0 66.6h0M421.8 75.6h0M421.5 84.6h0M421.2 93.6h0M420.9 102.6h0M420.6 111.6h0M420.3 120.6h0M420.0 129.6h0M419.7 138.6h0M419.4 147.6h0M419.1 156.6h0M418.8 165.6h0M418.6 174.6h0M418.3 183.6h0M418.0 192.5h0M417.7 201.5h0M417.4 210.5h0M417.1 219.5h0M416.8 228.5h0M416.5 237.5h0M416.2 246.5h0M415.9 255.5h0M415.6 264.5h0M415.4 273.5h0M415.1 282.5h0M414.8 291.5h0M414.5 300.5h0M414.2 309.5h0M413.9 318.5h0M431.2 26.4h0M431.0 35.4h0M430.7 44.4h0M430.4 53.4h0M430.1 62.4h0M429.8 71.4h0M429.5 80.4h0M429.2 89.4h0M428.9 98.3h0M428.6 107.3h0M428.3 116.3h0M428.0 125.3h0M427.8 134.3h0M427.5 143.3h0M427.2 152.3h0M426.9 161.3h0M426.6 170.3h0M426.3 179.3h0M426.0 188.3h0M425.7 197.3h0M425.4 206.3h0M425.1 215.3h0M424.8 224.3h0M424.6 233.3h0M424.3 242.3h0M424.0 251.3h0M423.7 260.3h0M423.4 269.3h0M423.1 278.2h0M422.8 287.2h0M422.5 296.2h0M422.2 305.2h0M421.9 314.2h0M439.3 22.1h0M439.0 31.1h0M438.7 40.1h0M438.4 49.1h0M438.1 58.1h0M437.8 67.1h0M437.5 76.1h0M437.2 85.1h0M437.0 94.1h0M436.7 103.1h0M436.4 112.1h0M436.1 121.1h0M435.8 130.1h0M435.5 139.1h0M435.2 148.1h0M434.9 157.1h0M434.6 166.1h0M434.3 175.0h0M434.0 184.0h0M433.7 193.0h0M433.5 202.0h0M433.2 211.0h0M432.9 220.0h0M432.6 229.0h0M432.3 238.0h0M432.0 247.0h0M431.7 256.0h0M431.4 265.0h0M431.1 274.0h0M430.8 283.0h0M430.5 292.0h0M430.3 301.0h0M430.0 310.0h0M429.7 319.0h0M447.0 26.9h0M446.7 35.9h0M446.4 44.9h0M446.1 53.9h0M445.9 62.9h0M445.6 71.9h0M445.3 80.9h0M445.0 89.8h0M444.7 98.8h0M444.4 107.8h0M444.1 116.8h0M443.8 125.8h0M443.5 134.8h0M443.2 143.8h0M442.9 152.8h0M442.7 161.8h0M442.4 170.8h0M442.1 179.8h0M441.8 188.8h0M441.5 197.8h0M441.2 206.8h0M440.9 215.8h0M440.6 224.8h0M440.3 233.8h0M440.0 242.8h0M439.7 251.8h0M439.5 260.7h0M439.2 269.7h0M438.9 278.7h0M438.6 287.7h0M438.3 296.7h0M438.0 305.7h0M437.7 314.7h0M455.1 22.6h0M454.8 31.6h0M454.5 40.6h0M454.2 49.6h0M453.9 58.6h0M453.6 67.6h0M453.3 76.6h0M453.0 85.6h0M452.7 94.6h0M452.4 103.6h0M452.1 112.6h0M451.9 121.6h0M451.6 130.6h0M451.3 139.6h0M451.0 148.6h0M450.7 157.6h0M450.4 166.5h0M450.1 175.5h0M449.8 184.5h0M449.5 193.5h0M449.2 202.5h0M448.9 211.5h0M448.6 220.5h0M448.4 229.5h0M448.1 238.5h0M447.8 247.5h0M447.5 256.5h0M447.2 265.5h0M446.9 274.5h0M446.6 283.5h0M446.3 292.5h0M446.0 301.5h0M445.7 310.5h0M445.4 319.5h0"/><filter id="bl" x="-5%" y="-5%" width="110%" height="110%"><feGaussianBlur stdDeviation="0.7 1.05"/></filter>
<linearGradient id="hz"><stop offset="0" stop-color="#020202"/><stop offset=".09" stop-color="#080808"/><stop offset=".91" stop-color="#080808"/><stop offset="1" stop-color="#020202"/></linearGradient>
<radialGradient id="dk"><stop offset="0" stop-color="#000" stop-opacity=".62"/><stop offset="1" stop-color="#000" stop-opacity="0"/></radialGradient></defs>
<rect x="118" y="0" width="370" height="465" fill="url(#hz)"/>
<g filter="url(#bl)"><use href="#dots" transform="scale(1 1.36)" fill="none" stroke="#fff" stroke-width="2.9" stroke-linecap="round"/></g>
<ellipse cx="421" cy="243" rx="17" ry="22" fill="url(#dk)"/><ellipse cx="446" cy="134" rx="9" ry="13" fill="url(#dk)"/><ellipse cx="246" cy="278" rx="18" ry="20" fill="url(#dk)" opacity=".6"/></svg>
<svg style="left:567px;top:158px;background:#000" width="552" height="465" viewBox="0 0 552 465">
<use href="#dots" transform="scale(1 1.36)" fill="none" stroke="#fff" stroke-width="3.8" stroke-linecap="round"/>
<rect x="450.6" y="125.6" width="4.2" height="6" fill="#f0f032"/><rect x="416.2" y="246.6" width="4.2" height="6" fill="#f0f032"/></svg>
<div class="chart" style="left:9px;top:629px;width:552px;height:464px;background:linear-gradient(#ffffff 0%,#f4f6fc 25%,#d9e3f6 62%,#bdcdef 100%)"><svg style="left:0;top:0" width="552" height="464" viewBox="0 0 552 464"><g stroke-width="1" fill="none"><path d="M69.5 14.5V416.0" stroke="#dadce4" stroke-dasharray="1 3"/><path d="M99.5 14.5V416.0" stroke="#dadce4" stroke-dasharray="1 3"/><path d="M113.5 14.5V416.0" stroke="#dadce4" stroke-dasharray="1 3"/><path d="M128.5 14.5V416.0" stroke="#dadce4" stroke-dasharray="1 3"/><path d="M143.5 14.5V416.0" stroke="#dadce4" stroke-dasharray="1 3"/><path d="M172.5 14.5V416.0" stroke="#dadce4" stroke-dasharray="1 3"/><path d="M187.5 14.5V416.0" stroke="#dadce4" stroke-dasharray="1 3"/><path d="M201.5 14.5V416.0" stroke="#dadce4" stroke-dasharray="1 3"/><path d="M216.5 14.5V416.0" stroke="#dadce4" stroke-dasharray="1 3"/><path d="M245.5 14.5V416.0" stroke="#dadce4" stroke-dasharray="1 3"/><path d="M260.5 14.5V416.0" stroke="#dadce4" stroke-dasharray="1 3"/><path d="M274.5 14.5V416.0" stroke="#dadce4" stroke-dasharray="1 3"/><path d="M289.5 14.5V416.0" stroke="#dadce4" stroke-dasharray="1 3"/><path d="M318.5 14.5V416.0" stroke="#dadce4" stroke-dasharray="1 3"/><path d="M333.5 14.5V416.0" stroke="#dadce4" stroke-dasharray="1 3"/><path d="M348.5 14.5V416.0" stroke="#dadce4" stroke-dasharray="1 3"/><path d="M362.5 14.5V416.0" stroke="#dadce4" stroke-dasharray="1 3"/><path d="M392.5 14.5V416.0" stroke="#dadce4" stroke-dasharray="1 3"/><path d="M406.5 14.5V416.0" stroke="#dadce4" stroke-dasharray="1 3"/><path d="M421.5 14.5V416.0" stroke="#dadce4" stroke-dasharray="1 3"/><path d="M436.5 14.5V416.0" stroke="#dadce4" stroke-dasharray="1 3"/><path d="M465.5 14.5V416.0" stroke="#dadce4" stroke-dasharray="1 3"/><path d="M480.5 14.5V416.0" stroke="#dadce4" stroke-dasharray="1 3"/><path d="M494.5 14.5V416.0" stroke="#dadce4" stroke-dasharray="1 3"/><path d="M509.5 14.5V416.0" stroke="#dadce4" stroke-dasharray="1 3"/><path d="M538.5 14.5V416.0" stroke="#dadce4" stroke-dasharray="1 3"/><path d="M66.6 404.5H537.5" stroke="#dadce4" stroke-dasharray="1 3"/><path d="M66.6 392.5H537.5" stroke="#dadce4" stroke-dasharray="1 3"/><path d="M66.6 380.5H537.5" stroke="#dadce4" stroke-dasharray="1 3"/><path d="M66.6 368.5H537.5" stroke="#dadce4" stroke-dasharray="1 3"/><path d="M66.6 345.5H537.5" stroke="#dadce4" stroke-dasharray="1 3"/><path d="M66.6 333.5H537.5" stroke="#dadce4" stroke-dasharray="1 3"/><path d="M66.6 321.5H537.5" stroke="#dadce4" stroke-dasharray="1 3"/><path d="M66.6 309.5H537.5" stroke="#dadce4" stroke-dasharray="1 3"/><path d="M66.6 285.5H537.5" stroke="#dadce4" stroke-dasharray="1 3"/><path d="M66.6 273.5H537.5" stroke="#dadce4" stroke-dasharray="1 3"/><path d="M66.6 261.5H537.5" stroke="#dadce4" stroke-dasharray="1 3"/><path d="M66.6 249.5H537.5" stroke="#dadce4" stroke-dasharray="1 3"/><path d="M66.6 225.5H537.5" stroke="#dadce4" stroke-dasharray="1 3"/><path d="M66.6 213.5H537.5" stroke="#dadce4" stroke-dasharray="1 3"/><path d="M66.6 202.5H537.5" stroke="#dadce4" stroke-dasharray="1 3"/><path d="M66.6 190.5H537.5" stroke="#dadce4" stroke-dasharray="1 3"/><path d="M66.6 166.5H537.5" stroke="#dadce4" stroke-dasharray="1 3"/><path d="M66.6 154.5H537.5" stroke="#dadce4" stroke-dasharray="1 3"/><path d="M66.6 142.5H537.5" stroke="#dadce4" stroke-dasharray="1 3"/><path d="M66.6 130.5H537.5" stroke="#dadce4" stroke-dasharray="1 3"/><path d="M66.6 106.5H537.5" stroke="#dadce4" stroke-dasharray="1 3"/><path d="M66.6 94.5H537.5" stroke="#dadce4" stroke-dasharray="1 3"/><path d="M66.6 82.5H537.5" stroke="#dadce4" stroke-dasharray="1 3"/><path d="M66.6 70.5H537.5" stroke="#dadce4" stroke-dasharray="1 3"/><path d="M66.6 47.5H537.5" stroke="#dadce4" stroke-dasharray="1 3"/><path d="M66.6 35.5H537.5" stroke="#dadce4" stroke-dasharray="1 3"/><path d="M66.6 23.5H537.5" stroke="#dadce4" stroke-dasharray="1 3"/><path d="M84.5 14.5V416.0" stroke="#c3c6d0" stroke-dasharray="1 2"/><path d="M157.5 14.5V416.0" stroke="#c3c6d0" stroke-dasharray="1 2"/><path d="M230.5 14.5V416.0" stroke="#c3c6d0" stroke-dasharray="1 2"/><path d="M304.5 14.5V416.0" stroke="#c3c6d0" stroke-dasharray="1 2"/><path d="M377.5 14.5V416.0" stroke="#c3c6d0" stroke-dasharray="1 2"/><path d="M450.5 14.5V416.0" stroke="#c3c6d0" stroke-dasharray="1 2"/><path d="M524.5 14.5V416.0" stroke="#c3c6d0" stroke-dasharray="1 2"/><path d="M66.6 356.5H537.5" stroke="#c3c6d0" stroke-dasharray="1 2"/><path d="M66.6 297.5H537.5" stroke="#c3c6d0" stroke-dasharray="1 2"/><path d="M66.6 237.5H537.5" stroke="#c3c6d0" stroke-dasharray="1 2"/><path d="M66.6 178.5H537.5" stroke="#c3c6d0" stroke-dasharray="1 2"/><path d="M66.6 118.5H537.5" stroke="#c3c6d0" stroke-dasharray="1 2"/><path d="M66.6 59.5H537.5" stroke="#c3c6d0" stroke-dasharray="1 2"/></g><polyline points="78.0,416.0 81.0,406.6 83.9,416.0 86.8,416.0 89.8,416.0 92.7,416.0 95.6,416.0 98.6,416.0 101.5,416.0 104.4,416.0 107.4,416.0 110.3,406.6 113.2,416.0 116.2,416.0 119.1,416.0 122.0,406.6 124.9,416.0 127.9,397.2 130.8,416.0 133.7,416.0 136.7,416.0 139.6,406.6 142.5,416.0 145.5,416.0 148.4,416.0 151.3,406.6 154.3,416.0 157.2,416.0 160.1,416.0 163.1,416.0 166.0,416.0 168.9,416.0 171.9,416.0 174.8,416.0 177.7,406.6 180.7,416.0 183.6,416.0 186.5,406.6 189.5,406.6 192.4,406.6 195.3,416.0 198.2,406.6 201.2,397.2 204.1,406.6 207.0,406.6 210.0,397.2 212.9,397.2 215.8,406.6 218.8,416.0 221.7,406.6 224.6,416.0 227.6,378.5 230.5,397.2 233.4,387.9 236.4,406.6 239.3,397.2 242.2,406.6 245.2,359.7 248.1,406.6 251.0,397.2 254.0,406.6 256.9,397.2 259.8,397.2 262.8,416.0 265.7,350.3 268.6,397.2 271.5,331.6 274.5,350.3 277.4,312.8 280.3,340.9 283.3,350.3 286.2,312.8 289.1,359.7 292.1,350.3 295.0,369.1 297.9,294.0 300.9,284.7 303.8,275.3 306.7,237.7 309.7,237.7 312.6,190.8 315.5,256.5 318.5,312.8 321.4,284.7 324.3,265.9 327.3,237.7 330.2,219.0 333.1,172.1 336.1,181.5 339.0,190.8 341.9,247.1 344.8,209.6 347.8,162.7 350.7,172.1 353.6,153.3 356.6,87.6 359.5,97.0 362.4,68.9 365.4,97.0 368.3,12.6 371.2,200.2 374.2,87.6 377.1,143.9 380.0,50.1 383.0,68.9 385.9,115.8 388.8,190.8 391.8,181.5 394.7,190.8 397.6,134.5 400.6,143.9 403.5,228.4 406.4,181.5 409.4,50.1 412.3,275.3 415.2,265.9 418.1,303.4 421.1,275.3 424.0,303.4 426.9,331.6 429.9,303.4 432.8,303.4 435.7,378.5 438.7,397.2 441.6,350.3 444.5,387.9 447.5,369.1 450.4,378.5 453.3,369.1 456.3,387.9 459.2,387.9 462.1,406.6 465.1,397.2 468.0,406.6 470.9,406.6 473.9,406.6 476.8,397.2 479.7,406.6 482.7,416.0 485.6,406.6" fill="none" stroke="#2a2ac8" stroke-width="1.1" stroke-linejoin="round"/><path d="M66.60 13.9V416.70M65.90 416.00H538.1" stroke="#000" stroke-width="1.25" fill="none"/><path d="M69.24 416.00v-3M98.56 416.00v-3M113.22 416.00v-3M127.88 416.00v-3M142.54 416.00v-3M171.86 416.00v-3M186.52 416.00v-3M201.18 416.00v-3M215.84 416.00v-3M245.16 416.00v-3M259.82 416.00v-3M274.48 416.00v-3M289.14 416.00v-3M318.46 416.00v-3M333.12 416.00v-3M347.78 416.00v-3M362.44 416.00v-3M391.76 416.00v-3M406.42 416.00v-3M421.08 416.00v-3M435.74 416.00v-3M465.06 416.00v-3M479.72 416.00v-3M494.38 416.00v-3M509.04 416.00v-3M538.36 416.00v-3M83.90 416.00v-5.6M157.20 416.00v-5.6M230.50 416.00v-5.6M303.80 416.00v-5.6M377.10 416.00v-5.6M450.40 416.00v-5.6M523.70 416.00v-5.6M66.60 404.09h3M66.60 392.17h3M66.60 380.25h3M66.60 368.34h3M66.60 344.51h3M66.60 332.60h3M66.60 320.68h3M66.60 308.76h3M66.60 284.93h3M66.60 273.02h3M66.60 261.11h3M66.60 249.19h3M66.60 225.36h3M66.60 213.44h3M66.60 201.53h3M66.60 189.62h3M66.60 165.78h3M66.60 153.87h3M66.60 141.95h3M66.60 130.04h3M66.60 106.21h3M66.60 94.29h3M66.60 82.38h3M66.60 70.46h3M66.60 46.63h3M66.60 34.72h3M66.60 22.81h3M66.60 356.42h5.8M66.60 296.85h5.8M66.60 237.27h5.8M66.60 177.70h5.8M66.60 118.12h5.8M66.60 58.55h5.8" stroke="#000" stroke-width="1.1"/></svg><span class="xl" style="left:53.2px;top:419.0px">100</span><span class="xl" style="left:126.5px;top:419.0px">125</span><span class="xl" style="left:199.8px;top:419.0px">150</span><span class="xl" style="left:273.1px;top:419.0px">175</span><span class="xl" style="left:346.4px;top:419.0px">200</span><span class="xl" style="left:419.7px;top:419.0px">225</span><span class="xl" style="left:493.0px;top:419.0px">250</span><span class="yl" style="left:1.8px;top:406.7px">0</span><span class="yl" style="left:1.8px;top:347.1px">0<i>.</i>5</span><span class="yl" style="left:1.8px;top:287.6px">1</span><span class="yl" style="left:1.8px;top:228.0px">1<i>.</i>5</span><span class="yl" style="left:1.8px;top:168.4px">2</span><span class="yl" style="left:1.8px;top:108.8px">2<i>.</i>5</span><span class="yl" style="left:1.8px;top:49.2px">3</span></div>
<div class="chart" style="left:567px;top:670px;width:552px;height:423px;background:linear-gradient(#ffffff 0%,#f4f6fc 25%,#d9e3f6 62%,#bdcdef 100%)"><svg style="left:0;top:0" width="552" height="423" viewBox="0 0 552 423"><g stroke-width="1" fill="none"><path d="M83.5 14.4V375.0" stroke="#dadce4" stroke-dasharray="1 3"/><path d="M100.5 14.4V375.0" stroke="#dadce4" stroke-dasharray="1 3"/><path d="M117.5 14.4V375.0" stroke="#dadce4" stroke-dasharray="1 3"/><path d="M134.5 14.4V375.0" stroke="#dadce4" stroke-dasharray="1 3"/><path d="M167.5 14.4V375.0" stroke="#dadce4" stroke-dasharray="1 3"/><path d="M184.5 14.4V375.0" stroke="#dadce4" stroke-dasharray="1 3"/><path d="M201.5 14.4V375.0" stroke="#dadce4" stroke-dasharray="1 3"/><path d="M218.5 14.4V375.0" stroke="#dadce4" stroke-dasharray="1 3"/><path d="M251.5 14.4V375.0" stroke="#dadce4" stroke-dasharray="1 3"/><path d="M268.5 14.4V375.0" stroke="#dadce4" stroke-dasharray="1 3"/><path d="M285.5 14.4V375.0" stroke="#dadce4" stroke-dasharray="1 3"/><path d="M302.5 14.4V375.0" stroke="#dadce4" stroke-dasharray="1 3"/><path d="M335.5 14.4V375.0" stroke="#dadce4" stroke-dasharray="1 3"/><path d="M352.5 14.4V375.0" stroke="#dadce4" stroke-dasharray="1 3"/><path d="M369.5 14.4V375.0" stroke="#dadce4" stroke-dasharray="1 3"/><path d="M386.5 14.4V375.0" stroke="#dadce4" stroke-dasharray="1 3"/><path d="M419.5 14.4V375.0" stroke="#dadce4" stroke-dasharray="1 3"/><path d="M436.5 14.4V375.0" stroke="#dadce4" stroke-dasharray="1 3"/><path d="M453.5 14.4V375.0" stroke="#dadce4" stroke-dasharray="1 3"/><path d="M470.5 14.4V375.0" stroke="#dadce4" stroke-dasharray="1 3"/><path d="M503.5 14.4V375.0" stroke="#dadce4" stroke-dasharray="1 3"/><path d="M520.5 14.4V375.0" stroke="#dadce4" stroke-dasharray="1 3"/><path d="M537.5 14.4V375.0" stroke="#dadce4" stroke-dasharray="1 3"/><path d="M66.4 357.5H537.5" stroke="#dadce4" stroke-dasharray="1 3"/><path d="M66.4 339.5H537.5" stroke="#dadce4" stroke-dasharray="1 3"/><path d="M66.4 321.5H537.5" stroke="#dadce4" stroke-dasharray="1 3"/><path d="M66.4 285.5H537.5" stroke="#dadce4" stroke-dasharray="1 3"/><path d="M66.4 267.5H537.5" stroke="#dadce4" stroke-dasharray="1 3"/><path d="M66.4 249.5H537.5" stroke="#dadce4" stroke-dasharray="1 3"/><path d="M66.4 213.5H537.5" stroke="#dadce4" stroke-dasharray="1 3"/><path d="M66.4 195.5H537.5" stroke="#dadce4" stroke-dasharray="1 3"/><path d="M66.4 177.5H537.5" stroke="#dadce4" stroke-dasharray="1 3"/><path d="M66.4 140.5H537.5" stroke="#dadce4" stroke-dasharray="1 3"/><path d="M66.4 122.5H537.5" stroke="#dadce4" stroke-dasharray="1 3"/><path d="M66.4 104.5H537.5" stroke="#dadce4" stroke-dasharray="1 3"/><path d="M66.4 68.5H537.5" stroke="#dadce4" stroke-dasharray="1 3"/><path d="M66.4 50.5H537.5" stroke="#dadce4" stroke-dasharray="1 3"/><path d="M66.4 32.5H537.5" stroke="#dadce4" stroke-dasharray="1 3"/><path d="M150.5 14.4V375.0" stroke="#c3c6d0" stroke-dasharray="1 2"/><path d="M234.5 14.4V375.0" stroke="#c3c6d0" stroke-dasharray="1 2"/><path d="M318.5 14.4V375.0" stroke="#c3c6d0" stroke-dasharray="1 2"/><path d="M402.5 14.4V375.0" stroke="#c3c6d0" stroke-dasharray="1 2"/><path d="M486.5 14.4V375.0" stroke="#c3c6d0" stroke-dasharray="1 2"/><path d="M66.4 303.5H537.5" stroke="#c3c6d0" stroke-dasharray="1 2"/><path d="M66.4 231.5H537.5" stroke="#c3c6d0" stroke-dasharray="1 2"/><path d="M66.4 159.5H537.5" stroke="#c3c6d0" stroke-dasharray="1 2"/><path d="M66.4 86.5H537.5" stroke="#c3c6d0" stroke-dasharray="1 2"/><path d="M66.4 14.5H537.5" stroke="#c3c6d0" stroke-dasharray="1 2"/></g><polyline points="100.0,332.4 133.6,277.9 167.2,190.3 200.8,108.0 234.4,48.1 268.0,23.9 301.6,14.2 335.2,20.7 368.8,26.8 402.4,53.9 436.0,108.0 469.6,177.6 503.2,247.3 536.8,305.4" fill="none" stroke="#32329a" stroke-width="1.1" stroke-linejoin="round"/><path d="M66.40 13.8V375.70M65.70 375.00H538.1" stroke="#000" stroke-width="1.25" fill="none"/><path d="M83.20 375.00v-3M100.00 375.00v-3M116.80 375.00v-3M133.60 375.00v-3M167.20 375.00v-3M184.00 375.00v-3M200.80 375.00v-3M217.60 375.00v-3M251.20 375.00v-3M268.00 375.00v-3M284.80 375.00v-3M301.60 375.00v-3M335.20 375.00v-3M352.00 375.00v-3M368.80 375.00v-3M385.60 375.00v-3M419.20 375.00v-3M436.00 375.00v-3M452.80 375.00v-3M469.60 375.00v-3M503.20 375.00v-3M520.00 375.00v-3M536.80 375.00v-3M150.40 375.00v-5.6M234.40 375.00v-5.6M318.40 375.00v-5.6M402.40 375.00v-5.6M486.40 375.00v-5.6M66.40 356.96h3M66.40 338.92h3M66.40 320.88h3M66.40 284.80h3M66.40 266.76h3M66.40 248.72h3M66.40 212.64h3M66.40 194.60h3M66.40 176.56h3M66.40 140.48h3M66.40 122.44h3M66.40 104.40h3M66.40 68.32h3M66.40 50.28h3M66.40 32.24h3M66.40 302.84h5.8M66.40 230.68h5.8M66.40 158.52h5.8M66.40 86.36h5.8M66.40 14.20h5.8" stroke="#000" stroke-width="1.1"/></svg><span class="xl" style="left:35.7px;top:378.0px">0</span><span class="xl" style="left:119.7px;top:378.0px">2<i>.</i>5</span><span class="xl" style="left:203.7px;top:378.0px">5</span><span class="xl" style="left:287.7px;top:378.0px">7<i>.</i>5</span><span class="xl" style="left:371.7px;top:378.0px">10</span><span class="xl" style="left:455.7px;top:378.0px">12<i>.</i>5</span><span class="yl" style="left:1.6px;top:365.7px">0</span><span class="yl" style="left:1.6px;top:293.5px">0<i>.</i>2</span><span class="yl" style="left:1.6px;top:221.4px">0<i>.</i>4</span><span class="yl" style="left:1.6px;top:149.2px">0<i>.</i>6</span><span class="yl" style="left:1.6px;top:77.1px">0<i>.</i>8</span><span class="yl" style="left:1.6px;top:4.9px">1</span></div>
<div class="h" style="left:567px;top:632px;width:80px;height:30px;font-size:24px">发光点:</div>
<div class="spin" style="left:652px;top:630px;width:64.6px;height:32.5px"></div>
<div style="left:652px;top:662.5px;width:83.6px;height:1px;background:#757575"></div>
<div class="t" style="left:623px;top:632.5px;width:120px;text-align:center;font-size:25.2px;line-height:29.0px;color:#000">0</div>
<svg style="left:715.8000000000001px;top:631px" width="19" height="30.5" viewBox="0 0 19 30.5">
<rect x=".5" y=".5" width="18" height="29.5" fill="#efefef" stroke="#c6c6c6"/><path d="M.5 15.2H18.5" stroke="#c6c6c6"/>
<path d="M4.9 8.8h9.2l-4.6-5z M4.9 19.7h9.2l-4.6 5z" fill="#000"/></svg>
<div class="info h" style="left:744px;top:631px;width:373.500px;height:31.600px;font-size:20px">质心水平能量:0.655  波动范围:0.879</div>
<div class="grp" style="left:1121px;top:173px;width:665.5px;height:450.5px"></div>
<div class="h" style="left:1129.3px;top:158.0px;width:53px;height:32px;background:#e8e8e8;font-size:24px">控制</div>
<div class="pane" style="left:1134.5px;top:240px;width:637.5px;height:370px"></div>
<div class="pl" style="left:1773.5px;top:240px;width:1px;height:372.5px"></div>
<div class="pl" style="left:1134.5px;top:611.5px;width:640.0px;height:1px"></div>
<div class="tab sel h" style="left:1134.5px;top:202.5px;width:83.5px;height:38.5px;font-size:24px">测量</div>
<div class="tab h" style="left:1218px;top:204.5px;width:79.7px;height:35.5px;font-size:24px">电机</div>
<div class="btn h" style="left:1146px;top:252px;width:261px;height:42px;font-size:24px;line-height:42px">曝光时间(us)</div>
<div class="btn h" style="left:1146px;top:300.2px;width:261px;height:42px;font-size:24px;line-height:42px">增益</div>
<div class="btn h" style="left:1146px;top:348.3px;width:261px;height:42px;font-size:24px;line-height:42px">阈值</div>
<div class="spin" style="left:1414px;top:253px;width:227.5px;height:40px"></div>
<div style="left:1414px;top:293px;width:257.5px;height:1px;background:#757575"></div>
<div class="t" style="left:1466px;top:259.3px;width:120px;text-align:center;font-size:25.2px;line-height:29.0px;color:#000">8000</div>
<svg style="left:1640.7px;top:254px" width="30" height="38" viewBox="0 0 30 38">
<rect x=".5" y=".5" width="29" height="37" fill="#efefef" stroke="#c6c6c6"/><path d="M.5 19.0H29.5" stroke="#c6c6c6"/>
<path d="M10.4 10.7h9.2l-4.6-5z M10.4 25.3h9.2l-4.6 5z" fill="#000"/></svg>
<div class="spin" style="left:1414px;top:301.2px;width:227.5px;height:40px"></div>
<div style="left:1414px;top:341.2px;width:257.5px;height:1px;background:#757575"></div>
<div class="t" style="left:1466px;top:307.5px;width:120px;text-align:center;font-size:25.2px;line-height:29.0px;color:#000">0</div>
<svg style="left:1640.7px;top:302.2px" width="30" height="38" viewBox="0 0 30 38">
<rect x=".5" y=".5" width="29" height="37" fill="#efefef" stroke="#c6c6c6"/><path d="M.5 19.0H29.5" stroke="#c6c6c6"/>
<path d="M10.4 10.7h9.2l-4.6-5z M10.4 25.3h9.2l-4.6 5z" fill="#000"/></svg>
<div class="spin" style="left:1414px;top:349.2px;width:313.5px;height:39.5px"></div>
<div class="t" style="left:1510px;top:355.7px;width:120px;text-align:center;font-size:25.2px;line-height:29.0px;color:#7d7d7d">258</div>
<svg style="left:1726.7px;top:350.2px" width="30.5" height="37.5" viewBox="0 0 30.5 37.5">
<rect x=".5" y=".5" width="29.5" height="36.5" fill="#efefef" stroke="#c6c6c6"/><path d="M.5 18.8H30.0" stroke="#c6c6c6"/>
<path d="M10.7 10.6h9.2l-4.6-5z M10.7 24.9h9.2l-4.6 5z" fill="#8c8c8c"/></svg>
<div class="h" style="left:1685px;top:259.2px;width:48px;height:30px;font-size:24px">自动</div>
<div style="left:1740.5px;top:262.2px;width:19.5px;height:19.5px;border:1px solid #5e5e5e;border-radius:4.5px;background:#f7f7f7"></div>
<div class="h" style="left:1685px;top:307.4px;width:48px;height:30px;font-size:24px">自动</div>
<div style="left:1740.5px;top:310.4px;width:19.5px;height:19.5px;border:1px solid #5e5e5e;border-radius:4.5px;background:#f7f7f7"></div>
<div class="btn h" style="left:1166px;top:436px;width:277px;height:42.5px;font-size:24px;line-height:42.5px">单次测量</div>
<div class="btn h" style="left:1462.7px;top:436px;width:277px;height:42.5px;font-size:24px;line-height:42.5px">连续测量</div>
<div class="btn h" style="left:1166px;top:490px;width:277px;height:42.5px;font-size:24px;line-height:42.5px">保存测试数据</div>
<div class="btn h" style="left:1462.7px;top:490px;width:277px;height:42.5px;font-size:24px;line-height:42.5px">保存图表</div>
<div class="grp" style="left:1121.5px;top:643px;width:665px;height:448px"></div>
<div class="h" style="left:1129.5px;top:627.1px;width:101px;height:32px;background:#e8e8e8;font-size:24px">输出数据</div>
<div class="pane" style="left:1134.5px;top:706px;width:637.5px;height:372.5px"></div>
<div class="pl" style="left:1773.5px;top:706px;width:1px;height:375.0px"></div>
<div class="pl" style="left:1134.5px;top:1080.0px;width:640.0px;height:1px"></div>
<div class="tab sel h" style="left:1134.5px;top:671.3px;width:135.2px;height:35px;font-size:20px">总体发光点</div>
<div class="tab h" style="left:1269.7px;top:673.7px;width:134.5px;height:32.3px;font-size:20px">单个发光点</div>
<div class="tab h" style="left:1404.2px;top:673.7px;width:113.3px;height:32.3px;font-size:20px">光束质量</div>
<div class="tbl" style="left:1146px;top:717px;width:614px;height:348.6px"></div>
<div style="left:1147px;top:718px;width:586px;height:34px;background:#fff"></div>
<div style="left:1147px;top:718px;width:51.3px;height:321px;background:#fff"></div>
<div class="tbody" style="left:1147px;top:718px;width:586px;height:321px"><div class="row" style="top:34.9px;height:38.5px"><b>1</b><span style="left:55.300px">224</span><span style="left:262.500px">41</span><span style="left:470px">126</span><i style="left:207.300px"></i><i style="left:414.200px"></i></div><div class="row" style="top:73.4px;height:38.9px"><b>2</b><span style="left:55.300px">219</span><span style="left:262.500px">40</span><span style="left:470px">122</span><i style="left:207.300px"></i><i style="left:414.200px"></i></div><div class="row" style="top:112.3px;height:38.8px"><b>3</b><span style="left:55.300px">227</span><span style="left:262.500px">41</span><span style="left:470px">126</span><i style="left:207.300px"></i><i style="left:414.200px"></i></div><div class="row" style="top:151.1px;height:38.9px"><b>4</b><span style="left:55.300px">204</span><span style="left:262.500px">38</span><span style="left:470px">112</span><i style="left:207.300px"></i><i style="left:414.200px"></i></div><div class="row" style="top:190.0px;height:38.8px"><b>5</b><span style="left:55.300px">228</span><span style="left:262.500px">41</span><span style="left:470px">127</span><i style="left:207.300px"></i><i style="left:414.200px"></i></div><div class="row" style="top:228.8px;height:39.3px"><b>6</b><span style="left:55.300px">193</span><span style="left:262.500px">37</span><span style="left:470px">105</span><i style="left:207.300px"></i><i style="left:414.200px"></i></div><div class="row" style="top:268.1px;height:38.9px"><b>7</b><span style="left:55.300px">216</span><span style="left:262.500px">40</span><span style="left:470px">122</span><i style="left:207.300px"></i><i style="left:414.200px"></i></div><div class="row" style="top:307.0px;height:14.0px"><b></b><span style="left:55.300px">210</span><span style="left:262.500px">40</span><span style="left:470px">121</span><i style="left:207.300px"></i><i style="left:414.200px"></i></div><i class="vl" style="left:258.300px"></i><i class="vl" style="left:465.200px"></i></div>
<div class="h" style="left:1256.9px;top:724px;width:90px;height:24px;font-size:16px">最大灰度值</div>
<div class="h" style="left:1463.8px;top:724px;width:90px;height:24px;font-size:16px">最小灰度值</div>
<div class="h" style="left:1655px;top:724px;width:78px;height:24px;font-size:16px">平均灰度值</div>
<div class="track" style="left:1733px;top:718px;width:26px;height:321px;"></div>
<div class="track" style="left:1147px;top:1039px;width:586px;height:25.6px;"></div>
<div style="left:1733px;top:1039px;width:26px;height:25.6px;background:#e8e8e8"></div>
<div class="sb" style="left:1733px;top:718px;width:26px;height:25px"><svg style="left:0;top:0" width="26" height="25" viewBox="0 0 26 25"><path d="M5.0 14.7h13l-6.5-7z" fill="#000"/></svg></div>
<div class="sb" style="left:1733px;top:743px;width:26px;height:27.5px"><svg style="left:0;top:0" width="26" height="27.5" viewBox="0 0 26 27.5"><path d="" fill="#000"/></svg></div>
<div class="sb" style="left:1733px;top:1013px;width:26px;height:25.5px"><svg style="left:0;top:0" width="26" height="25.5" viewBox="0 0 26 25.5"><path d="M5.0 8.55h13l-6.5 7z" fill="#000"/></svg></div>
<div class="sb" style="left:1147px;top:1039px;width:26px;height:25.6px"><svg style="left:0;top:0" width="26" height="25.6" viewBox="0 0 26 25.6"><path d="M15.0 5.300000000000001v13l-7-6.5z" fill="#000"/></svg></div>
<div class="sb" style="left:1255px;top:1039px;width:164px;height:25.6px"><svg style="left:0;top:0" width="164" height="25.6" viewBox="0 0 164 25.6"><path d="" fill="#000"/></svg></div>
<div class="sb" style="left:1707px;top:1039px;width:26px;height:25.6px"><svg style="left:0;top:0" width="26" height="25.6" viewBox="0 0 26 25.6"><path d="M9.0 5.300000000000001v13l7-6.5z" fill="#000"/></svg></div>
<div style="left:0px;top:1104px;width:1799px;height:36px;background:#fff"></div>
<div class="h" style="left:4px;top:1108px;width:380px;height:30px;font-size:24px">Running...... 积分时间:7997 增益:0</div>
<div class="h" style="left:1514px;top:1108px;width:262px;height:30px;font-size:24px">相机:<span>已连接</span> 电机:<span>已连接</span></div>
<div style="left:1776px;top:1106px;width:1px;height:31px;background:#c3c3cb"></div>
<svg style="left:0;top:0;z-index:50" width="1799" height="1140" viewBox="0 0 1799 1140">
<path d="M1799 0V1140H0V1133Q0 1140 7 1140H1789Q1797.8 1140 1797.8 1131V8Q1797.8 0 1790 0Z" fill="#6e6e6e"/>
<path d="M0 0H3Q0 0 0 3Z" fill="#777"/></svg>
<svg id="ov" style="left:0;top:0" width="1799" height="1140" viewBox="0 0 1799 1140"><defs><clipPath id="cliphdr"><rect x="1600" y="718" width="133" height="34"/></clipPath></defs>
<text x="6.3" y="68.9" font-size="24">文件</text>
<text x="70.3" y="68.9" font-size="24">设备</text>
<text x="134.3" y="68.9" font-size="24">测量</text>
<text x="198.3" y="68.9" font-size="24">视图</text>
<text x="262.3" y="68.9" font-size="24">设置</text>
<text x="326.3" y="68.9" font-size="24">关于</text>
<text class="sf" x="283.59" y="1083.3" font-size="17.5">能量值</text>
<text class="sf" transform="translate(28.3 845) rotate(-90)" x="0" y="0" font-size="17.3" text-anchor="middle">百分比(%)</text>
<text class="sf" x="832.4" y="1084" font-size="17.5">像素(px)</text>
<text class="sf" transform="translate(587.5 866) rotate(-90)" x="0" y="0" font-size="17.5" text-anchor="middle">归一化能量</text>
<text x="566.78" y="656.5" font-size="24">发光点:</text>
<text x="745.98" y="654.7" font-size="20">质心水平能量:0.655</text>
<text x="936.6" y="654.7" font-size="20">波动范围:0.879</text>
<text x="1131.53" y="184" font-size="24">控制</text>
<text x="1150.88" y="231.3" font-size="24">测量</text>
<text x="1233.84" y="232.5" font-size="24">电机</text>
<text x="1206.21" y="283.3" font-size="24">曝光时间(us)</text>
<text x="1251.7" y="331.5" font-size="24">增益</text>
<text x="1251.7" y="379.7" font-size="24" style="fill:#8b8b8b">阈值</text>
<text x="1683.4" y="282.5" font-size="24">自动</text>
<text x="1683.4" y="330.7" font-size="24">自动</text>
<text x="1256.3" y="468" font-size="24">单次测量</text>
<text x="1553.2" y="468" font-size="24">连续测量</text>
<text x="1232.3" y="522" font-size="24">保存测试数据</text>
<text x="1553.2" y="522" font-size="24">保存图表</text>
<text x="1131.49" y="653.1" font-size="24">输出数据</text>
<text x="1151.06" y="695.4" font-size="20">总体发光点</text>
<text x="1286.95" y="697" font-size="20">单个发光点</text>
<text x="1423.11" y="697" font-size="20">光束质量</text>
<text x="1261.86" y="742.5" font-size="16" style="fill:#111">最大灰度值</text>
<text x="1468.76" y="742.5" font-size="16" style="fill:#111">最小灰度值</text>
<g clip-path="url(#cliphdr)"><text x="1655.57" y="742.5" font-size="16" style="fill:#111">平均灰度值</text></g>
<text x="3.15" y="1133.6" font-size="24">Running......</text>
<text x="145.4" y="1133.6" font-size="24">积分时间:7997</text>
<text x="311.55" y="1133.6" font-size="24">增益:0</text>
<text x="1513.94" y="1133.6" font-size="24">相机:<tspan style="fill:#1b9144">已连接</tspan></text>
<text x="1648.56" y="1133.6" font-size="24">电机:<tspan style="fill:#1b9144">已连接</tspan></text>
</svg>
</body></html>
